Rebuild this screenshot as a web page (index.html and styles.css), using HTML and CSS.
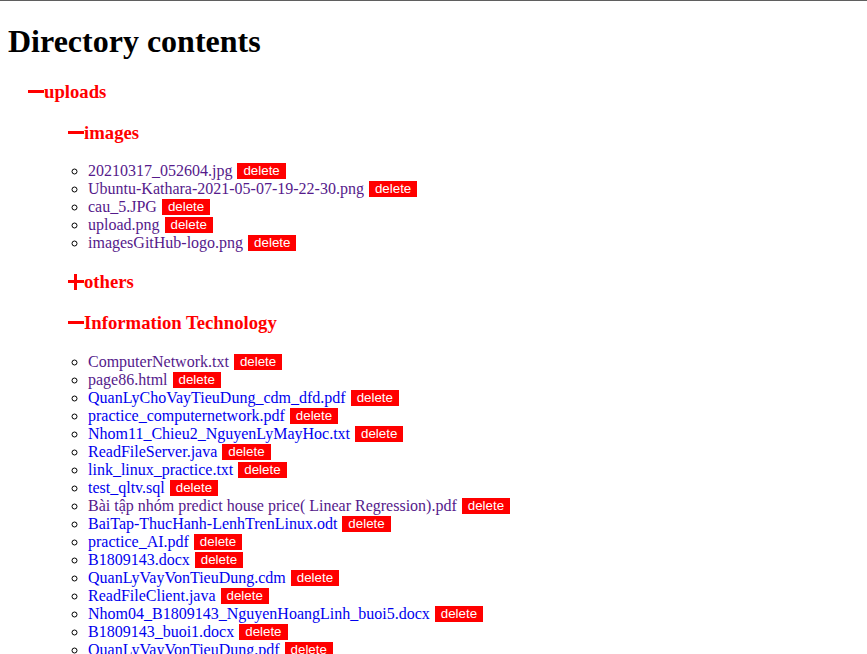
FILE: index.html
```html
<!DOCTYPE html>
<html>
<head>
<meta charset="utf-8">
<link rel="stylesheet" href="styles.css">
</head>
<body>
<h1 class="title">Directory contents</h1>
<div class="dir lvl1">
  <h3 class="dir-name"><span class="icon minus"></span>uploads</h3>
  <div class="dir lvl2">
    <h3 class="dir-name"><span class="icon minus"></span>images</h3>
    <ul class="files">
      <li><a class="file visited" href="#">20210317_052604.jpg</a> <span class="del">delete</span></li>
      <li><a class="file visited" href="#">Ubuntu-Kathara-2021-05-07-19-22-30.png</a> <span class="del">delete</span></li>
      <li><a class="file visited" href="#">cau_5.JPG</a> <span class="del">delete</span></li>
      <li><a class="file visited" href="#">upload.png</a> <span class="del">delete</span></li>
      <li><a class="file visited" href="#">imagesGitHub-logo.png</a> <span class="del">delete</span></li>
    </ul>
    <h3 class="dir-name"><span class="icon plus"></span>others</h3>
    <h3 class="dir-name"><span class="icon minus"></span>Information Technology</h3>
    <ul class="files">
      <li><a class="file visited" href="#">ComputerNetwork.txt</a> <span class="del">delete</span></li>
      <li><a class="file visited" href="#">page86.html</a> <span class="del">delete</span></li>
      <li><a class="file" href="#">QuanLyChoVayTieuDung_cdm_dfd.pdf</a> <span class="del">delete</span></li>
      <li><a class="file" href="#">practice_computernetwork.pdf</a> <span class="del">delete</span></li>
      <li><a class="file" href="#">Nhom11_Chieu2_NguyenLyMayHoc.txt</a> <span class="del">delete</span></li>
      <li><a class="file" href="#">ReadFileServer.java</a> <span class="del">delete</span></li>
      <li><a class="file" href="#">link_linux_practice.txt</a> <span class="del">delete</span></li>
      <li><a class="file" href="#">test_qltv.sql</a> <span class="del">delete</span></li>
      <li><a class="file visited" href="#">Bài tập nhóm predict house price( Linear Regression).pdf</a> <span class="del">delete</span></li>
      <li><a class="file" href="#">BaiTap-ThucHanh-LenhTrenLinux.odt</a> <span class="del">delete</span></li>
      <li><a class="file" href="#">practice_AI.pdf</a> <span class="del">delete</span></li>
      <li><a class="file" href="#">B1809143.docx</a> <span class="del">delete</span></li>
      <li><a class="file" href="#">QuanLyVayVonTieuDung.cdm</a> <span class="del">delete</span></li>
      <li><a class="file" href="#">ReadFileClient.java</a> <span class="del">delete</span></li>
      <li><a class="file" href="#">Nhom04_B1809143_NguyenHoangLinh_buoi5.docx</a> <span class="del">delete</span></li>
      <li><a class="file" href="#">B1809143_buoi1.docx</a> <span class="del">delete</span></li>
      <li><a class="file" href="#">QuanLyVayVonTieuDung.pdf</a> <span class="del">delete</span></li>
    </ul>
  </div>
</div>
</body>
</html>
```
FILE: styles.css
```css
html {
  border-top: 1px solid #5f5f5f;
}
body {
  margin: 8px;
  font-family: "Liberation Serif", "Times New Roman", serif;
  font-size: 16px;
  color: #000;
  background: #fff;
}
.title {
  font-size: 32px;
  font-weight: bold;
  margin: 14px 0 21px;
}
.lvl1 {
  margin-left: 20px;
}
.lvl2 {
  margin-left: 40px;
}
.dir-name {
  font-size: 18.72px;
  font-weight: bold;
  color: #ff0000;
  margin: 18.72px 0;
  display: flex;
  align-items: center;
}
.icon {
  display: inline-block;
  position: relative;
  width: 16px;
  height: 16px;
  flex: none;
}
.icon::before,
.icon::after {
  content: "";
  position: absolute;
  background: #ff0000;
}
.icon::before {
  left: 0;
  right: 0;
  top: 6px;
  height: 3px;
}
.plus::after {
  top: 0;
  bottom: 0;
  left: 6px;
  width: 3px;
}
.files {
  list-style: circle;
  margin: 16px 0;
  padding-left: 20px;
}
.files li {
  line-height: 18px;
  height: 18px;
}
.file {
  color: #0000ee;
  text-decoration: none;
}
.file.visited {
  color: #551a8b;
}
.del {
  display: inline-block;
  background: #ff0000;
  color: #fff;
  font-family: "Liberation Sans", Arial, sans-serif;
  font-size: 13.33px;
  line-height: 16px;
  padding: 0 6px;
  margin-left: 1px;
  vertical-align: top;
  margin-top: 1px;
}
```
